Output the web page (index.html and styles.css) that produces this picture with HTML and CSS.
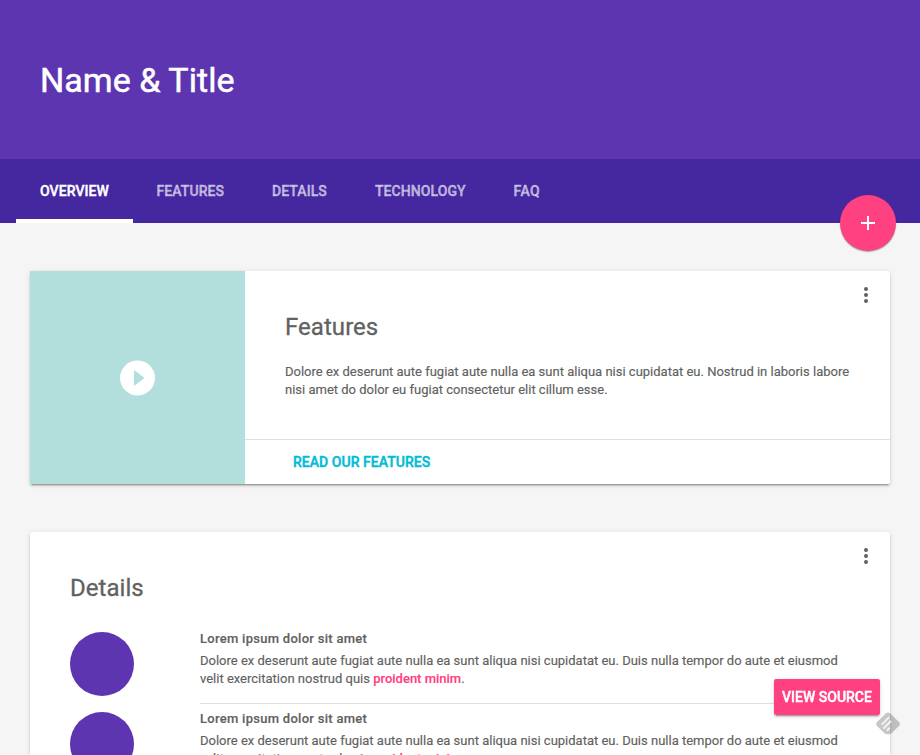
FILE: index.html
```html
<!DOCTYPE html>
<html lang="en">
<head>
<meta charset="utf-8">
<title>Name &amp; Title</title>
<link rel="stylesheet" href="styles.css">
</head>
<body>
<header class="header">
  <h3 class="title">Name &amp; Title</h3>
  <nav class="tabs">
    <a class="tab tab-active t-overview"><span>Overview</span></a>
    <a class="tab t-features"><span>Features</span></a>
    <a class="tab t-details"><span>Details</span></a>
    <a class="tab t-technology"><span>Technology</span></a>
    <a class="tab t-faq"><span>FAQ</span></a>
    <button class="fab" aria-label="Add"><svg width="24" height="24" viewBox="0 0 24 24"><path d="M5 12H19M12 5V19" stroke="#fff" stroke-width="2"/></svg></button>
  </nav>
</header>
<main class="content">
  <section class="card card-features">
    <div class="media">
      <svg width="43" height="42" viewBox="0 0 43 42"><path fill="#fff" fill-rule="evenodd" d="M21.500 3.500a17.500 17.500 0 1 1 0 35a17.500 17.500 0 1 1 0-35zM18 13v16L28.500 21z"/></svg>
    </div>
    <div class="card-main">
      <div class="card-text">
        <h4 class="heading">Features</h4>
        <p class="copy">Dolore ex deserunt aute fugiat aute nulla ea sunt aliqua nisi cupidatat eu. Nostrud in laboris labore<br>nisi amet do dolor eu fugiat consectetur elit cillum esse.</p>
      </div>
      <div class="actions"><a class="button-flat">Read our features</a></div>
    </div>
    <button class="more" aria-label="More"><svg width="24" height="24" viewBox="0 0 24 24"><g fill="#616161"><circle cx="12" cy="6" r="2"/><circle cx="12" cy="12" r="2"/><circle cx="12" cy="18" r="2"/></g></svg></button>
  </section>
  <section class="card card-details">
    <h4 class="heading">Details</h4>
    <div class="row">
      <div class="circle"></div>
      <div class="row-text">
        <h5>Lorem ipsum dolor sit amet</h5>
        <p>Dolore ex deserunt aute fugiat aute nulla ea sunt aliqua nisi cupidatat eu. Duis nulla tempor do aute et eiusmod<br>velit exercitation nostrud quis <a>proident minim</a>.</p>
      </div>
    </div>
    <div class="row">
      <div class="circle"></div>
      <div class="row-text">
        <h5>Lorem ipsum dolor sit amet</h5>
        <p>Dolore ex deserunt aute fugiat aute nulla ea sunt aliqua nisi cupidatat eu. Duis nulla tempor do aute et eiusmod<br>velit exercitation nostrud quis <a>proident minim</a>.</p>
      </div>
    </div>
    <button class="more" aria-label="More"><svg width="24" height="24" viewBox="0 0 24 24"><g fill="#616161"><circle cx="12" cy="6" r="2"/><circle cx="12" cy="12" r="2"/><circle cx="12" cy="18" r="2"/></g></svg></button>
  </section>
</main>
<a class="view-source"><span>View Source</span></a>
<svg class="badge" width="24" height="24" viewBox="0 0 24 24">
  <path d="M10 1.300Q12 -.2 14 1.300L23 10Q25 12 23 14L15.500 21.300Q14.500 22.200 13 22.200H11Q9.500 22.200 8.500 21.300L1 14Q-1 12 1 10Z" fill="#000" fill-opacity=".22"/>
  <path d="M6.200 12.200L12.700 5.700M8 16L14.500 9.500M11.500 18L13.300 16.200" stroke="#fff" stroke-opacity=".8" stroke-width="1.900" stroke-linecap="round"/>
</svg>
</body>
</html>
```

FILE: styles.css
```css
* { box-sizing: border-box; }
body {
  margin: 0;
  height: 755px;
  overflow: hidden;
  background: #f5f5f5;
  color: #616161;
  font: 400 13px/18px Roboto, sans-serif;
  -webkit-text-stroke: .15px;
}
h3, h4, h5, p { margin: 0; font-weight: 400; }
button { border: 0; padding: 0; background: none; }
svg { display: block; }
.header { background: #5e35b1; color: #fff; }
.title {
  height: 159px;
  padding: 60px 40px 0;
  font-size: 34px;
  line-height: 40px;
  letter-spacing: .05px;
  -webkit-text-stroke: .5px;
}
.tabs {
  position: relative;
  display: flex;
  height: 64px;
  padding-left: 16px;
  background: #4527a0;
}
.tab {
  padding: 0 24px;
  border-bottom: 4px solid transparent;
  color: rgba(255, 255, 255, .6);
  font-size: 14px;
  font-weight: 500;
  line-height: 64px;
  letter-spacing: .08px;
  text-transform: uppercase;
  white-space: nowrap;
  -webkit-text-stroke: .4px;
}
.tab-active { color: #fff; border-color: #fff; }
.t-overview { width: 116.500px; }
.t-features { width: 115.500px; }
.t-details { width: 103px; }
.t-technology { width: 138.500px; }
.t-faq { letter-spacing: .4px; }
.fab {
  position: absolute;
  right: 24px;
  top: 36px;
  width: 56px;
  height: 56px;
  display: grid;
  place-items: center;
  border-radius: 50%;
  background: #ff4081;
  box-shadow: 0 1px 1.500px rgba(0, 0, 0, .12), 0 1px 1px rgba(0, 0, 0, .24);
}
.content { padding: 48px 30px 0; }
.card {
  position: relative;
  background: #fff;
  border-radius: 2px;
  box-shadow: 0 2px 2px rgba(0, 0, 0, .14), 0 3px 1px -2px rgba(0, 0, 0, .2), 0 1px 5px rgba(0, 0, 0, .12);
}
.card-features { display: flex; height: 213px; margin-bottom: 48px; }
.media {
  width: 215px;
  display: grid;
  place-items: center;
  background: #b2dfdb;
}
.card-main { flex: 1; display: flex; flex-direction: column; }
.card-text { flex: 1; padding: 40px 0 0 40px; }
.heading { font-size: 24px; line-height: 32px; letter-spacing: .05px; -webkit-text-stroke: .3px; }
.copy { margin-top: 20px; white-space: nowrap; }
.actions { height: 45px; padding: 4px 40px; border-top: 1px solid #e0e0e0; }
.button-flat {
  display: block;
  padding: 0 8px;
  color: #00bcd4;
  font-size: 14px;
  font-weight: 500;
  line-height: 36px;
  letter-spacing: .04px;
  text-transform: uppercase;
  -webkit-text-stroke: .4px;
}
.more { position: absolute; right: 12px; top: 12px; }
.card-details { height: 223px; padding: 40px 40px 0; border-radius: 2px 2px 0 0; overflow: hidden; }
.row { display: flex; gap: 66px; height: 80px; }
.card-details .heading { margin-bottom: 28px; }
.circle { width: 64px; height: 64px; border-radius: 50%; background: #5e35b1; }
.row-text { flex: 1; height: 72px; border-bottom: 1px solid #e0e0e0; white-space: nowrap; }
h5 { font-size: 13px; font-weight: 500; line-height: 13px; margin-bottom: 7px; letter-spacing: .28px; }
.row-text a { color: #ff4081; font-weight: 500; }
.view-source {
  position: fixed;
  right: 40px;
  bottom: 40px;
  width: 106px;
  height: 36px;
  border-radius: 2px;
  background: #ff4081;
  color: #fff;
  font-size: 14px;
  font-weight: 500;
  line-height: 36px;
  text-align: center;
  text-transform: uppercase;
  white-space: nowrap;
  -webkit-text-stroke: .4px;
  box-shadow: 0 2px 2px rgba(0, 0, 0, .14), 0 3px 1px -2px rgba(0, 0, 0, .2), 0 1px 5px rgba(0, 0, 0, .12);
}
.badge { position: fixed; left: 876px; top: 712px; }
```
